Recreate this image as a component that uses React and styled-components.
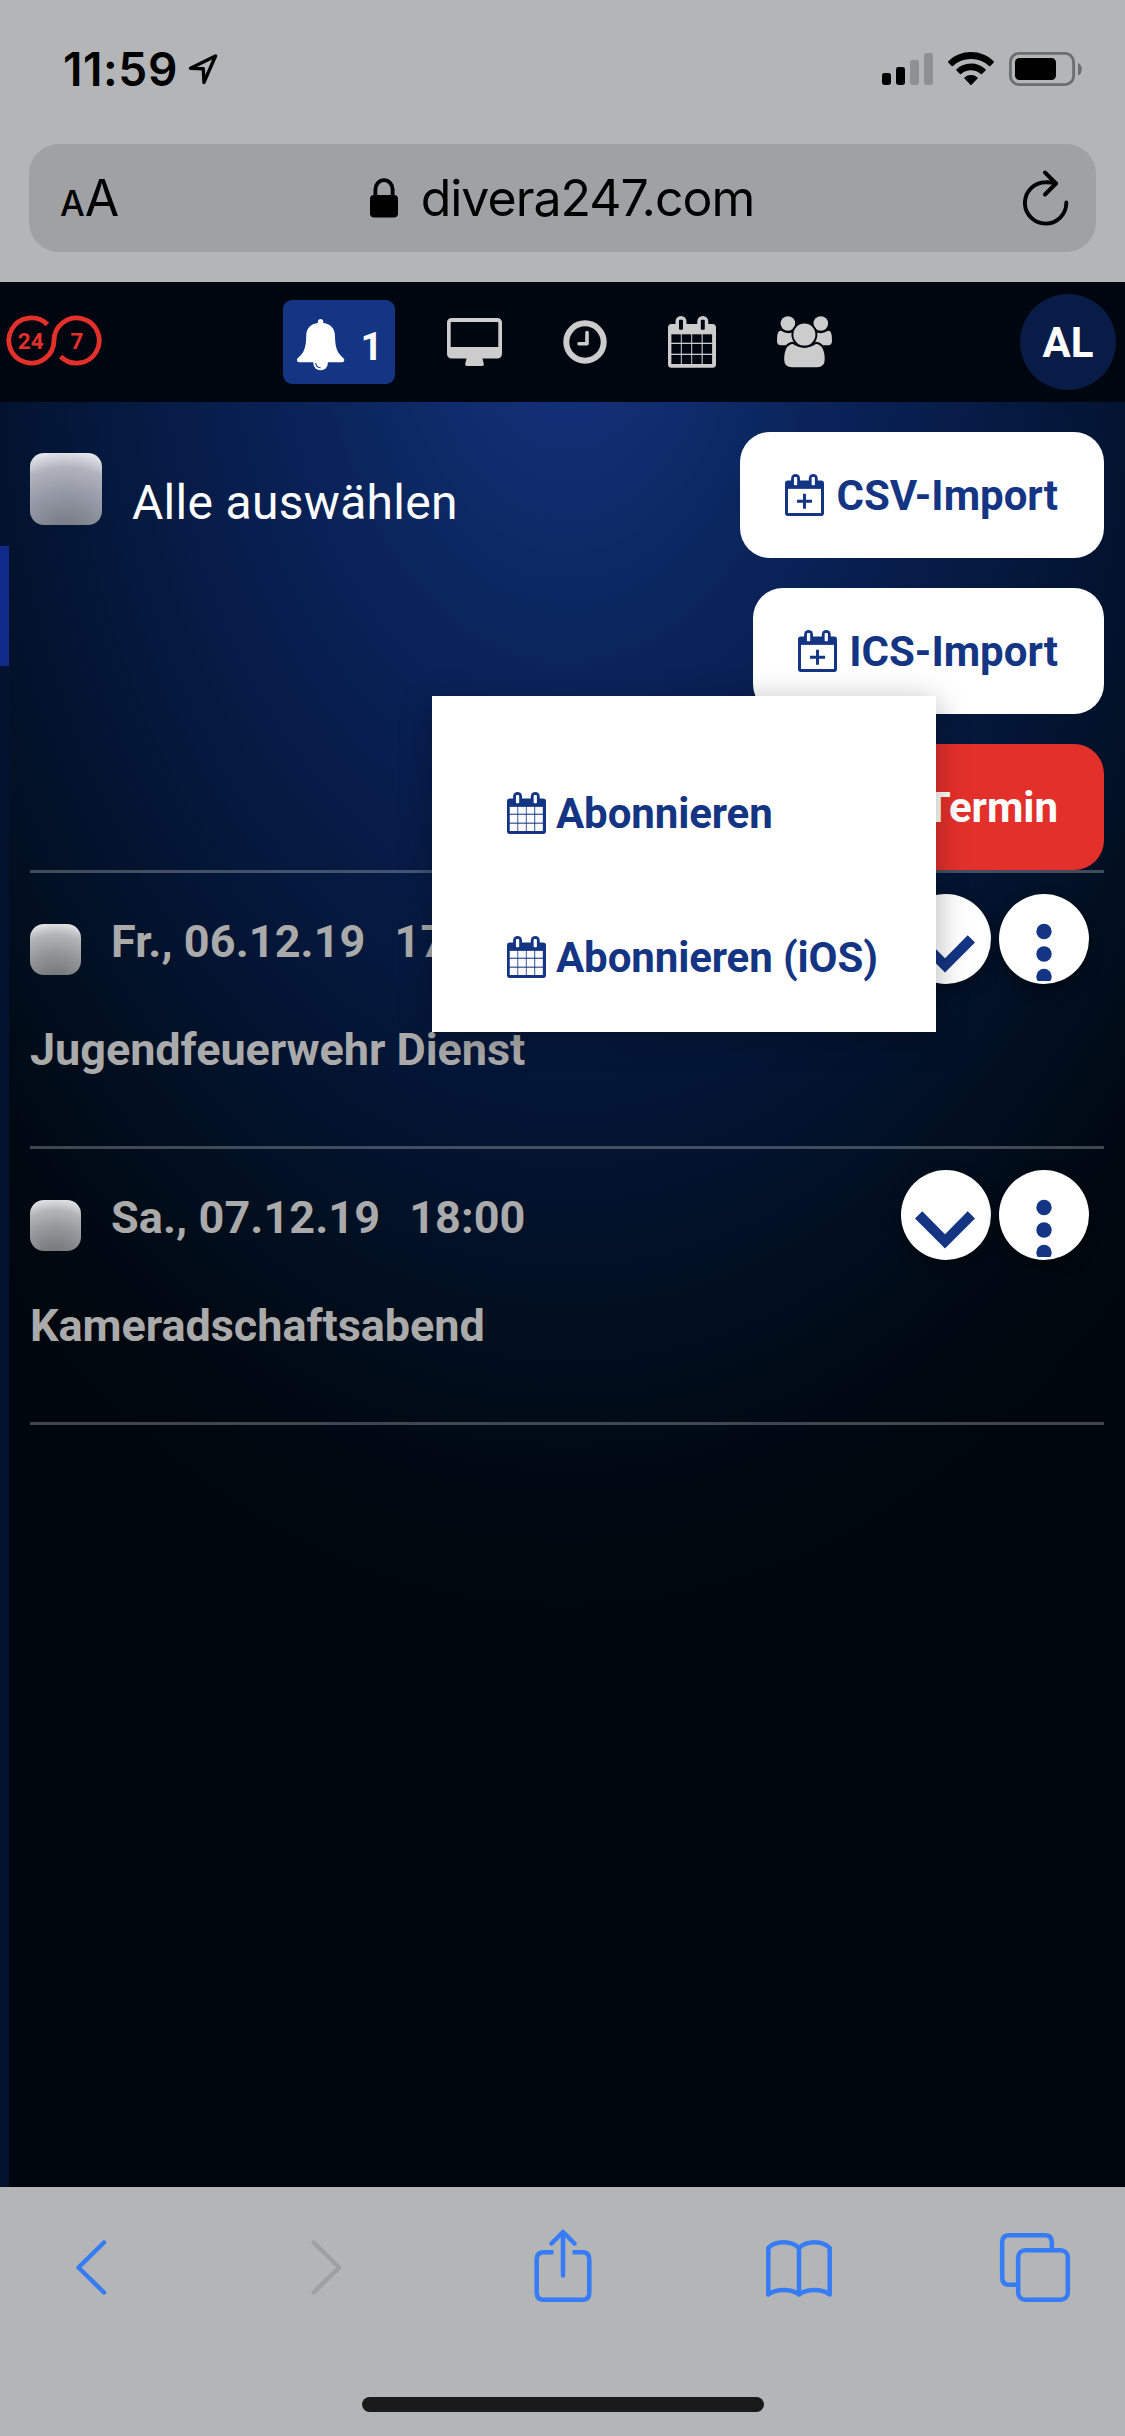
import React from "react";
import styled, { createGlobalStyle } from "styled-components";

const events = [
  { date: "Fr., 06.12.19", time: "17:00", title: "Jugendfeuerwehr Dienst" },
  { date: "Sa., 07.12.19", time: "18:00", title: "Kameradschaftsabend" },
];

/* ---------- icons ---------- */

const LocationIcon = () => (
  <svg width="31" height="31" viewBox="0 0 31 31" fill="none" stroke="#000" strokeWidth="3.4" strokeLinejoin="round">
    <path d="M2.500 14.200L27.500 2L16 28.400L15.300 14.800Z" />
  </svg>
);

const SignalIcon = () => (
  <svg width="51" height="32" viewBox="0 0 51 32">
    <rect x="0" y="20" width="9" height="12" rx="2.4" />
    <rect x="14" y="14" width="9" height="18" rx="2.4" />
    <rect x="28" y="7" width="9" height="25" rx="2.4" fill="#8f9092" />
    <rect x="42" y="0" width="9" height="32" rx="2.4" fill="#8f9092" />
  </svg>
);

const WifiIcon = () => (
  <svg width="46" height="34" viewBox="0 0 46 34">
    <path d="M23 0C14.2 0 6.200 3.400.3 9.300a.8.8 0 0 0 0 1.200L3.700 14a.9.9 0 0 0 1.200 0A26 26 0 0 1 23 7a26 26 0 0 1 18.100 7a.9.9 0 0 0 1.200 0l3.400-3.500a.8.8 0 0 0 0-1.200C39.800 3.400 31.800 0 23 0Z" />
    <path d="M23 11.500c-5.600 0-10.700 2.200-14.500 5.700a.8.8 0 0 0 0 1.200l3.500 3.500a.9.9 0 0 0 1.200 0A14.300 14.300 0 0 1 23 18.200c3.700 0 7.200 1.400 9.800 3.700a.9.9 0 0 0 1.200 0l3.500-3.500a.8.8 0 0 0 0-1.200A21.300 21.300 0 0 0 23 11.500Z" />
    <path d="M23 23a10 10 0 0 0-6.500 2.400a.8.8 0 0 0 0 1.200l5.900 6.100a.8.8 0 0 0 1.200 0l5.900-6.100a.8.8 0 0 0 0-1.200A10 10 0 0 0 23 23Z" />
  </svg>
);

const BatteryIcon = () => (
  <svg width="73" height="34" viewBox="0 0 73 34">
    <rect x="1.400" y="1.400" width="63.200" height="31.200" rx="8.500" fill="none" stroke="#6c6d6f" strokeWidth="2.800" />
    <rect x="6" y="6" width="41" height="22" rx="4.500" />
    <path d="M69 11c5 1.500 5 11 0 12.500Z" fill="#6c6d6f" />
  </svg>
);

const LockIcon = () => (
  <svg width="28" height="40" viewBox="0 0 28 40">
    <rect x="0" y="17" width="28" height="22.500" rx="4" />
    <path d="M5.400 19V11.500a8.600 9.400 0 0 1 17.200 0V19" fill="none" stroke="#000" strokeWidth="3.800" />
  </svg>
);

const ReloadIcon = () => (
  <svg width="46" height="56" viewBox="0 0 46 56" fill="none" stroke="#000" strokeWidth="3.900" strokeLinecap="round" strokeLinejoin="round">
    <path d="M43.300 32.500A20.700 20.700 0 1 1 22.600 12.200Q28 12 33 13.500" />
    <path d="M22 2.500L33 13.500L22 24.500" />
  </svg>
);

const Logo = () => (
  <LogoSvg width="96" height="51" viewBox="0 0 96 51">
    <path
      d="M41.400 9.500A22.600 22.600 0 1 0 48 25.500A22.600 22.600 0 1 1 54.600 41.500"
      fill="none"
      stroke="#e4302b"
      strokeWidth="4.800"
    />
    <g fill="#e4302b" fontFamily="Roboto, sans-serif" fontWeight="700" fontSize="22.500" textAnchor="middle">
      <text x="24.700" y="33.700">24</text>
      <text x="71" y="33.700">7</text>
    </g>
  </LogoSvg>
);

const BellIcon = () => (
  <svg width="48" height="52" viewBox="0 0 48 52">
    <path
      fill="#fff"
      d="M23.600 0c1.600 0 2.700 1.100 2.700 2.700V4C33.500 4.800 38 9.600 38 17c0 11.500 2.500 17.500 8.500 22.200c1.500 1.200.8 4.100-1.500 4.100H2.200c-2.300 0-3-2.900-1.500-4.100C6.700 34.500 9.200 28.500 9.200 17c0-7.400 4.500-12.200 11.700-13V2.700C20.900 1.100 22 0 23.600 0Z"
    />
    <circle cx="23.600" cy="44" r="7.300" fill="#fff" />
    <path d="M18.700 44q.4 4.300 4.900 4.900" fill="none" stroke="#143583" strokeWidth="1.100" />
  </svg>
);

const MonitorIcon = () => (
  <svg width="55" height="48" viewBox="0 0 55 48" fill="#ccc">
    <path
      fillRule="evenodd"
      d="M4.500 0h46A4.500 4.500 0 0 1 55 4.500v31.500a4.500 4.500 0 0 1-4.500 4.500H35.500l1.300 5.400q.2 2.100-1.500 2.100H19.700q-1.700 0-1.500-2.100l1.300-5.400H4.500A4.500 4.500 0 0 1 0 36V4.500A4.500 4.500 0 0 1 4.500 0ZM3.700 4.500V29H51.300V4.500Q51.300 4 50.800 4H4.200Q3.700 4 3.700 4.500Z"
    />
  </svg>
);

const ClockIcon = () => (
  <svg width="44" height="44" viewBox="0 0 44 44" fill="none" stroke="#ccc">
    <circle cx="22" cy="22" r="18.700" strokeWidth="6" />
    <path d="M24 12.500V23.800H16" strokeWidth="3.600" strokeLinejoin="round" strokeLinecap="round" />
  </svg>
);

const CalendarIcon = ({ width = 48, color = "#ccc", hole = "#00060f", plus }) => (
  <svg width={width} height={(width * 52) / 48} viewBox="0 0 48 52" fill={color}>
    <rect x="0" y="8" width="48" height="43.800" rx="3.500" />
    <rect x="7.500" y="0" width="11" height="16" rx="5.500" />
    <rect x="29.300" y="0" width="11" height="16" rx="5.500" />
    <g fill={hole}>
      <rect x="11" y="3.800" width="4" height="10" rx="1" />
      <rect x="32.800" y="3.800" width="4" height="10" rx="1" />
      {plus ? (
        <rect x="3.700" y="18.300" width="40.600" height="29.700" />
      ) : (
        [
          [18.3, 8.4],
          [28, 9.7],
          [39, 9],
        ].map(([y, h]) => [3.4, 13.8, 24.2, 34.7].map((x) => <rect key={`${x}-${y}`} x={x} y={y} width="9.400" height={h} />))
      )}
    </g>
    {plus && <path d="M24 24.200v18.600M14.700 33.500h18.600" stroke={color} strokeWidth="3.600" />}
  </svg>
);

const UsersIcon = () => (
  <svg width="55" height="52" viewBox="0 0 55 52" fill="#ccc">
    <circle cx="10.900" cy="7.500" r="7.300" />
    <circle cx="43.800" cy="7.500" r="7.300" />
    <path d="M4 14.800Q10.800 19.300 17.500 15.500V27L11 29.200H4Q0 29.200 0 25Q0 17 2 15.300Q3 14.300 4 14.800Z" />
    <path d="M51 14.800Q44.200 19.300 37.500 15.500V27L44 29.200H51Q55 29.200 55 25Q55 17 53 15.300Q52 14.300 51 14.800Z" />
    <path
      stroke="#00060f"
      strokeWidth="2"
      d="M16 26.800Q27.400 34.500 38.800 26.800Q48.700 28 48.700 43.500Q48.700 52.300 40 52.300H15Q6.200 52.300 6.200 43.500Q6.200 28 16 26.800Z"
    />
    <circle cx="27.400" cy="18.600" r="12" stroke="#00060f" strokeWidth="2" />
  </svg>
);

const ChevronIcon = () => (
  <svg width="90" height="90" viewBox="0 0 90 90">
    <path fill="#143583" d="M14 48.500L21.300 41.300L44 64.200L66.700 41.300L74 48.500L44 78.500Z" />
  </svg>
);

const DotsIcon = () => (
  <svg width="90" height="87" viewBox="0 0 90 87" fill="#143583">
    <circle cx="45" cy="37.500" r="7.700" />
    <circle cx="45" cy="60" r="7.700" />
    <circle cx="45" cy="82.500" r="7.700" />
  </svg>
);

const BackIcon = () => (
  <ToolSvg>
    <path d="M49 13.500L23.500 38.500L49 63.500" />
  </ToolSvg>
);

const ForwardIcon = () => (
  <ToolSvg $muted>
    <path d="M22.700 13.500L48.200 38.500L22.700 63.500" />
  </ToolSvg>
);

const ShareIcon = () => (
  <ToolSvg>
    <path strokeLinecap="butt" d="M26.500 23.300H16.700Q9.700 23.300 9.700 30.300V63.700Q9.700 70.700 16.700 70.700H55.300Q62.300 70.700 62.300 63.700V30.300Q62.300 23.300 55.300 23.300H45.500" />
    <path d="M36 46.500V3.500M24.500 14.500L36 3L47.500 14.500" />
  </ToolSvg>
);

const BookIcon = () => (
  <ToolSvg>
    <path d="M5.300 18.800C13 11.300 28 11.300 36 18.800C44 11.300 59 11.300 66.700 18.800V65.500C59 59.500 44 59.500 36 65.500C28 59.500 13 59.500 5.300 65.500ZM36 18.800V65.500" />
  </ToolSvg>
);

const TabsIcon = () => (
  <ToolSvg>
    <path strokeLinecap="butt" d="M52.800 20V13.200Q52.800 6.200 45.800 6.200H10.200Q3.200 6.200 3.200 13.200V48.800Q3.200 55.800 10.200 55.800H18" />
    <rect x="19.200" y="21.200" width="49.600" height="49.600" rx="7" />
  </ToolSvg>
);

/* ---------- app ---------- */

const App = () => {
  return (
    <Phone>
      <GlobalStyle />
      <BrowserTop>
        <StatusBar>
          <Clock>11:59</Clock>
          <LocationIcon />
          <StatusIcons>
            <SignalIcon />
            <WifiIcon />
            <BatteryIcon />
          </StatusIcons>
        </StatusBar>
        <AddressBar>
          <TextSize>
            <small>A</small>A
          </TextSize>
          <Address>
            <LockIcon />
            <span>divera247.com</span>
          </Address>
          <Reload>
            <ReloadIcon />
          </Reload>
        </AddressBar>
      </BrowserTop>

      <Header>
        <Logo />
        <Nav>
          <AlarmBadge>
            <BellIcon />
            <AlarmCount>1</AlarmCount>
          </AlarmBadge>
          <MonitorIcon />
          <ClockIcon />
          <CalendarIcon />
          <UsersIcon />
        </Nav>
        <Avatar>AL</Avatar>
      </Header>

      <Main>
        <Rail>
          <RailThumb />
        </Rail>
        <Content>
          <Actions>
            <SelectAll>
              <Checkbox $size={72} $radius={14} $tint />
              <SelectLabel>Alle auswählen</SelectLabel>
            </SelectAll>
            <Buttons>
              <Button>
                <CalendarIcon width={39} color="#143583" hole="#fff" plus />
                CSV-Import
              </Button>
              <Button>
                <CalendarIcon width={39} color="#143583" hole="#fff" plus />
                ICS-Import
              </Button>
              <Button $danger>
                <CalendarIcon width={39} color="#fff" hole="#e4302b" plus />
                Termin
              </Button>
            </Buttons>
          </Actions>
          {events.map((event) => (
            <EventRow key={event.title}>
              <EventHead>
                <RowCheckbox $size={51} $radius={14} />
                <When>
                  <span>{event.date}</span>
                  <span>{event.time}</span>
                </When>
                <RoundButton>
                  <ChevronIcon />
                </RoundButton>
                <RoundButton>
                  <DotsIcon />
                </RoundButton>
              </EventHead>
              <EventTitle>{event.title}</EventTitle>
            </EventRow>
          ))}
        </Content>
        <Menu>
          <MenuItem>
            <CalendarIcon width={39} color="#143583" hole="#fff" />
            Abonnieren
          </MenuItem>
          <MenuItem>
            <CalendarIcon width={39} color="#143583" hole="#fff" />
            Abonnieren (iOS)
          </MenuItem>
        </Menu>
      </Main>

      <BrowserBottom>
        <Tools>
          <BackIcon />
          <ForwardIcon />
          <ShareIcon />
          <BookIcon />
          <TabsIcon />
        </Tools>
        <HomeIndicator />
      </BrowserBottom>
    </Phone>
  );
};

const GlobalStyle = createGlobalStyle`
  * {
    box-sizing: border-box;
  }
  body {
    margin: 0;
    background: #00060c;
    font-family: Roboto, sans-serif;
  }
  svg {
    display: block;
    flex: none;
  }
`;

const Phone = styled.div`
  width: 1125px;
  height: 2436px;
  display: flex;
  flex-direction: column;
  overflow: hidden;
`;

const BrowserTop = styled.div`
  height: 282px;
  background: #b3b5b7;
  font-family: Inter, sans-serif;
  color: #000;
`;

const StatusBar = styled.div`
  height: 138px;
  display: flex;
  align-items: center;
  padding: 0 43px 0 63px;
`;

const Clock = styled.span`
  font-size: 46px;
  font-weight: 600;
  width: 125px;
  letter-spacing: 0.6px;
`;

const StatusIcons = styled.div`
  margin-left: auto;
  display: flex;
  align-items: center;
  gap: 15px;
`;

const AddressBar = styled.div`
  height: 108px;
  margin: 6px 29px 0;
  padding: 0 27px 0 31px;
  border-radius: 30px;
  background: #a0a1a3;
  display: grid;
  grid-template-columns: 1fr auto 1fr;
  align-items: center;
`;

const TextSize = styled.span`
  padding-top: 4px;
  font-size: 50px;
  line-height: 60px;
  small {
    font-size: 35px;
    font-weight: 500;
  }
`;

const Address = styled.div`
  display: flex;
  align-items: center;
  gap: 23px;
  margin-right: 5px;
  font-size: 50px;
  line-height: 60px;
  letter-spacing: -1px;
`;

const Reload = styled.div`
  justify-self: end;
`;

const Header = styled.header`
  height: 120px;
  flex: none;
  background: #00060f;
  display: flex;
  align-items: center;
  padding: 0 9px 0 6px;
`;

const LogoSvg = styled.svg`
  margin-bottom: 3px;
`;

const Nav = styled.nav`
  display: flex;
  align-items: center;
  gap: 61px;
  margin-left: 181px;
`;

const AlarmBadge = styled.div`
  width: 112px;
  height: 84px;
  margin-right: -9px;
  padding: 5px 12px 0 14px;
  border-radius: 9px;
  background: #143583;
  color: #fff;
  font-size: 39px;
  font-weight: 700;
  display: flex;
  align-items: center;
  justify-content: space-between;
`;

const AlarmCount = styled.span`
  padding-top: 4px;
`;

const Avatar = styled.div`
  width: 96px;
  height: 96px;
  margin-left: auto;
  border-radius: 50%;
  background: #091c48;
  color: #fff;
  font-size: 42px;
  font-weight: 700;
  display: flex;
  align-items: center;
  justify-content: center;
`;

const Main = styled.main`
  position: relative;
  height: 1785px;
  flex: none;
  display: flex;
  background: radial-gradient(
    ellipse 860px 1330px at 567px -120px,
    #14357f 0%,
    #122f75 10%,
    #0c2862 23%,
    #081f52 38%,
    #061a42 51%,
    #031432 65%,
    #010f20 78%,
    #000913 90%,
    #00060d 100%
  );
`;

const Rail = styled.div`
  width: 9px;
  padding-top: 144px;
  background: #03122f;
`;

const RailThumb = styled.div`
  height: 120px;
  background: #102a8c;
`;

const Content = styled.div`
  flex: 1;
  padding: 0 21px;
`;

const Actions = styled.div`
  padding-top: 30px;
  display: flex;
  justify-content: space-between;
  border-bottom: 3px solid rgba(255, 255, 255, 0.25);
`;

const SelectAll = styled.div`
  display: flex;
  align-items: flex-start;
  gap: 30px;
  padding-top: 21px;
`;

const SelectLabel = styled.span`
  margin-top: 22px;
  color: #fff;
  font-size: 48px;
  line-height: 56px;
  letter-spacing: 0.3px;
`;

const Checkbox = styled.div`
  flex: none;
  width: ${({ $size }) => $size}px;
  height: ${({ $size }) => $size}px;
  border-radius: ${({ $radius }) => $radius}px;
  background: radial-gradient(
    circle at 50% 125%,
    ${({ $tint }) => ($tint ? "#70747e, #7e828c 25%, #9599a5 52%, #b0b3bd 78%, #f4f5f8" : "#6c6c6d, #7a7b7d 22%, #959699 52%, #b4b5b8 78%, #f4f4f5")}
  );
`;

const Buttons = styled.div`
  display: flex;
  flex-direction: column;
  align-items: flex-end;
  gap: 30px;
`;

const Button = styled.button`
  height: 126px;
  padding: 0 46px 0 45px;
  border: 0;
  border-radius: 30px;
  background: ${({ $danger }) => ($danger ? "#e4302b" : "#fff")};
  color: ${({ $danger }) => ($danger ? "#fff" : "#143583")};
  font-family: inherit;
  font-size: 42px;
  font-weight: 700;
  display: flex;
  align-items: center;
  gap: 12px;
`;

const EventRow = styled.section`
  height: 276px;
  padding-top: 21px;
  border-bottom: 3px solid rgba(255, 255, 255, 0.25);
  color: #aaa;
  font-size: 45px;
  font-weight: 700;
  line-height: 53px;
`;

const EventHead = styled.div`
  height: 90px;
  padding-right: 15px;
  display: flex;
  align-items: flex-start;
  gap: 8px;
`;

const RowCheckbox = styled(Checkbox)`
  margin: 30px 22px 0 0;
`;

const When = styled.div`
  flex: 1;
  margin-top: 21px;
  display: flex;
  gap: 29px;
  letter-spacing: 0.08px;
`;

const RoundButton = styled.div`
  width: 90px;
  height: 90px;
  border-radius: 50%;
  background: #fff;
  box-shadow: 0 6px 15px rgba(0, 0, 0, 0.4);
`;

const EventTitle = styled.div`
  margin-top: 39px;
  letter-spacing: -0.05px;
`;

const Menu = styled.div`
  position: absolute;
  top: 294px;
  left: 432px;
  width: 504px;
  height: 336px;
  padding: 45px 0 0 75px;
  background: #fff;
  box-shadow: 0 6px 30px rgba(0, 0, 0, 0.3);
`;

const MenuItem = styled.div`
  height: 144px;
  display: flex;
  align-items: center;
  gap: 10px;
  color: #143583;
  font-size: 42px;
  font-weight: 700;
  letter-spacing: -0.1px;
`;

const BrowserBottom = styled.footer`
  height: 249px;
  padding-top: 42px;
  background: #b3b5b7;
  display: flex;
  flex-direction: column;
  align-items: center;
`;

const Tools = styled.div`
  display: flex;
  gap: 164px;
`;

const ToolSvg = styled.svg.attrs({ width: 72, height: 76, viewBox: "0 0 72 76" })`
  fill: none;
  stroke: ${({ $muted }) => ($muted ? "#9fa0a2" : "#367cf7")};
  stroke-width: 4.500px;
  stroke-linecap: round;
  stroke-linejoin: round;
`;

const HomeIndicator = styled.div`
  width: 402px;
  height: 15px;
  margin-top: 92px;
  border-radius: 8px;
  background: #1a1a1a;
`;

export default App;
